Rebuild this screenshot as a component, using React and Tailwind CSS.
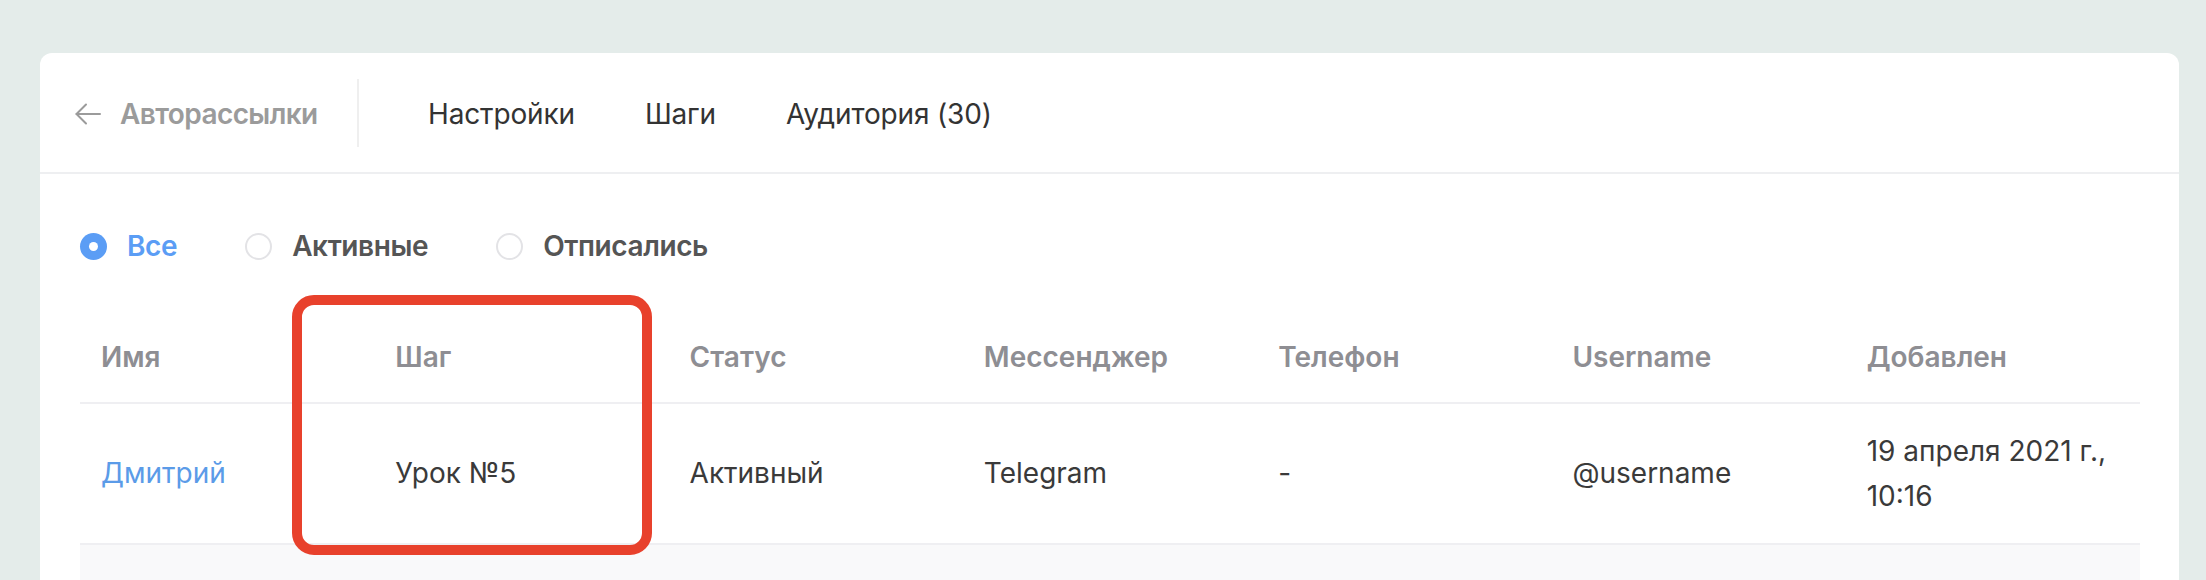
import React from "react";

const font = { fontFamily: "Inter, 'Noto Sans', 'Liberation Sans', sans-serif" };

function Radio({ checked, label }) {
  return (
    <div className="flex items-center gap-[20px]">
      {checked ? (
        <span className="w-[27px] h-[27px] rounded-full bg-[#5b9df5] flex items-center justify-center">
          <span className="w-[9px] h-[9px] rounded-full bg-white" />
        </span>
      ) : (
        <span className="w-[27px] h-[27px] rounded-full border-2 border-[#e3e3e6] bg-white" />
      )}
      <span
        className={
          "text-[28px] leading-[45px] font-semibold tracking-[-0.4px] " +
          (checked ? "text-[#5b9df5]" : "text-[#555555]")
        }
      >
        {label}
      </span>
    </div>
  );
}

const headers = ["Имя", "Шаг", "Статус", "Мессенджер", "Телефон", "Username", "Добавлен"];

export default function App() {
  return (
    <div className="min-h-screen bg-[#e4ecea] pt-[53px] pl-[40px]" style={font}>
      <div className="w-[2139px] bg-white rounded-t-[12px] h-[527px] overflow-hidden">
        {/* Header */}
        <div className="flex items-center h-[121px] pt-[3px] border-b-2 border-[#eeeff1]">
          <div className="flex items-center w-[317px] pl-[35px] gap-[19px] text-[#9b9b9b]">
            <svg width="26" height="22" viewBox="0 0 26 22" fill="none" stroke="#9b9b9b" strokeWidth="2" strokeLinecap="round" strokeLinejoin="round">
              <path d="M25 11H1.5" />
              <path d="M11 1.5L1.5 11L11 20.5" />
            </svg>
            <span className="text-[28px] font-semibold leading-[40px] tracking-[-0.6px]">Авторассылки</span>
          </div>
          <div className="w-[2px] h-[68px] -mt-[3px] bg-[#efefef]" />
          <div className="flex items-center gap-[70px] ml-[69px] text-[28px] text-[#333333] leading-[40px] tracking-[-0.15px]">
            <span>Настройки</span>
            <span>Шаги</span>
            <span>Аудитория (30)</span>
          </div>
        </div>

        {/* Radios */}
        <div className="flex items-center gap-[68px] pl-[40px] pt-[50px]">
          <Radio checked label="Все" />
          <Radio label="Активные" />
          <Radio label="Отписались" />
        </div>

        {/* Table */}
        <div className="relative ml-[40px] mt-[43px] w-[2060px]">
          <div className="grid grid-cols-7 h-[92px] items-center border-b-2 border-[#efeff2]">
            {headers.map((h) => (
              <div key={h} className="pl-[21px] text-[28px] font-semibold text-[#8e8e93] leading-[45px]">
                {h}
              </div>
            ))}
          </div>
          <div className="grid grid-cols-7 h-[141px] items-center border-b-2 border-[#efeff2] text-[28px] leading-[45px] text-[#3a3a3a]">
            <div className="pl-[21px] text-[#5b9be8]">Дмитрий</div>
            <div className="pl-[21px]">Урок №5</div>
            <div className="pl-[21px]">Активный</div>
            <div className="pl-[21px]">Telegram</div>
            <div className="pl-[21px]">-</div>
            <div className="pl-[21px]">@username</div>
            <div className="pl-[21px]">
              19 апреля 2021 г.,
              <br />
              10:16
            </div>
          </div>
          <div className="h-[60px] bg-[#f9f9fa]" />
          <div className="absolute left-[212px] top-[-17px] w-[360px] h-[260px] border-[10px] border-[#e8412c] rounded-[22px]" />
        </div>
      </div>
    </div>
  );
}
